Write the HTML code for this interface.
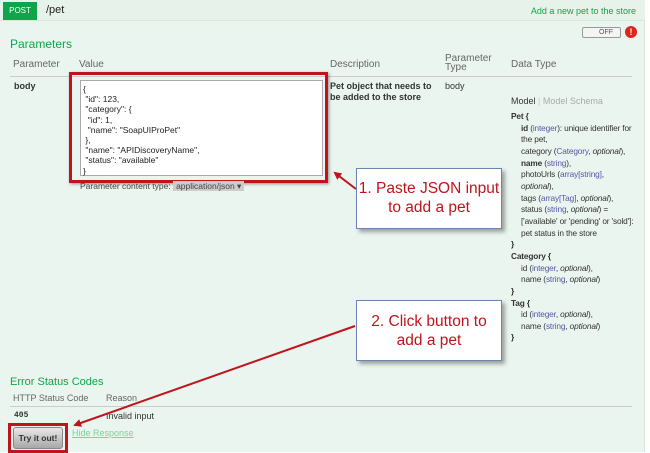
<!DOCTYPE html>
<html><head><meta charset="utf-8"><style>
*{margin:0;padding:0;box-sizing:border-box}
body{width:650px;height:452px;overflow:hidden;background:#fff;font-family:"Liberation Sans",Arial,sans-serif;position:relative}
.a{position:absolute;white-space:nowrap}
.g{color:#10a54a}
.s{font-size:9px;color:#333}
.h{font-size:10px;color:#666}
.dt{position:absolute;left:511px;top:111px;font-size:8.3px;line-height:11.65px;color:#333;letter-spacing:-0.15px}
.dt b{font-weight:bold}
.p{color:#55a;}
.dt .i{padding-left:10px}
.call{position:absolute;background:#fff;border:1px solid #6b86b0;box-shadow:3px 3px 4px rgba(0,0,0,.35);color:#c0141c;font-size:15.5px;text-align:center;line-height:19px}
</style></head><body>
<div class="a" style="left:0;top:0;width:645px;height:452px;background:#ebf5ef;border-right:1px solid #d4e6da"></div>
<div class="a" style="left:0;top:0;width:645px;height:21px;background:#e6f2ea;border-bottom:1px solid #d5e8dc"></div>
<div class="a" style="left:3px;top:2px;width:34px;height:18px;background:#10a54a;color:#fff;font-size:8px;line-height:18px;text-align:center">POST</div>
<div class="a" style="left:46px;top:4px;font-size:11px;color:#222">/pet</div>
<div class="a g" style="right:14px;top:6px;font-size:9px">Add a new pet to the store</div>
<div class="a" style="left:582px;top:27px;width:39px;height:11px;border:1px solid #999;border-radius:2px;background:#f4f4f4;font-size:7px;color:#555;line-height:9px;padding-left:16px">OFF</div>
<div class="a" style="left:625px;top:26px;width:12px;height:12px;border-radius:6px;background:#e2231a;color:#fff;font-size:9px;font-weight:bold;text-align:center;line-height:12px">!</div>
<div class="a g" style="left:10px;top:37px;font-size:12px">Parameters</div>
<div class="a h" style="left:13px;top:59px">Parameter</div>
<div class="a h" style="left:79px;top:59px">Value</div>
<div class="a h" style="left:330px;top:59px">Description</div>
<div class="a h" style="left:445px;top:54px;line-height:9px">Parameter<br>Type</div>
<div class="a h" style="left:511px;top:59px">Data Type</div>
<div class="a" style="left:10px;top:76px;width:622px;height:1px;background:#ccc"></div>
<div class="a s" style="left:14px;top:81px;font-weight:bold">body</div>
<div class="a" style="left:69px;top:72px;width:259px;height:111px;border:3px solid #c0141c;box-shadow:1px 1px 3px rgba(0,0,0,.4)"></div>
<div class="a" style="left:80px;top:80px;width:243px;height:96px;background:#fff;border:1px solid #aaa;font-size:8.5px;line-height:10.2px;color:#222;padding:3px 2px;white-space:pre">{
 "id": 123,
 "category": {
  "id": 1,
  "name": "SoapUIProPet"
 },
 "name": "APIDiscoveryName",
 "status": "available"
}</div>
<div class="a" style="left:80px;top:181px;font-size:8.5px;color:#444">Parameter content type: <span style="background:#ccc;padding:0 3px">application/json ▾</span></div>
<div class="a s" style="left:330px;top:81px;font-weight:bold;line-height:11px">Pet object that needs to<br>be added to the store</div>
<div class="a s" style="left:445px;top:81px">body</div>
<div class="a" style="left:511px;top:96px;font-size:9px;color:#333">Model <span style="color:#ccc">|</span> <span style="color:#aaa">Model Schema</span></div>
<div class="dt">
<b>Pet {</b><br>
<div class="i"><b>id</b> (<span class="p">integer</span>): unique identifier for<br>the pet,<br>category (<span class="p">Category</span>, <i>optional</i>),<br><b>name</b> (<span class="p">string</span>),<br>photoUrls (<span class="p">array[string]</span>,<br><i>optional</i>),<br>tags (<span class="p">array[Tag]</span>, <i>optional</i>),<br>status (<span class="p">string</span>, <i>optional</i>) =<br>['available' or 'pending' or 'sold']:<br>pet status in the store</div>
<b>}</b><br><b>Category {</b>
<div class="i">id (<span class="p">integer</span>, <i>optional</i>),<br>name (<span class="p">string</span>, <i>optional</i>)</div>
<b>}</b><br><b>Tag {</b>
<div class="i">id (<span class="p">integer</span>, <i>optional</i>),<br>name (<span class="p">string</span>, <i>optional</i>)</div>
<b>}</b>
</div>
<div class="a g" style="left:10px;top:376px;font-size:11px">Error Status Codes</div>
<div class="a h" style="left:13px;top:393px;font-size:9px">HTTP Status Code</div>
<div class="a h" style="left:106px;top:393px;font-size:9px">Reason</div>
<div class="a" style="left:10px;top:406px;width:622px;height:1px;background:#ccc"></div>
<div class="a s" style="left:14px;top:411px;font-family:'Liberation Mono',monospace;font-weight:bold;font-size:8px">405</div>
<div class="a s" style="left:106px;top:411px">Invalid input</div>
<div class="a" style="left:8px;top:423px;width:60px;height:30px;border:3px solid #c0141c"></div>
<div class="a" style="left:13px;top:427px;width:50px;height:22px;background:linear-gradient(#e8e8e8,#a8a8a8);border-radius:3px;border:1px solid #888;font-size:8.5px;font-weight:bold;color:#333;text-align:center;line-height:20px">Try it out!</div>
<div class="a" style="left:72px;top:428px;font-size:9px;color:#7bd29a;text-decoration:underline">Hide Response</div>
<svg class="a" style="left:0;top:0" width="650" height="452">
<defs><marker id="m" markerWidth="8" markerHeight="8" refX="6" refY="4" orient="auto" markerUnits="userSpaceOnUse"><path d="M0,0L8,4L0,8z" fill="#c0141c"/></marker></defs>
<line x1="356" y1="189" x2="335" y2="173" stroke="#c0141c" stroke-width="2" marker-end="url(#m)"/>
<line x1="355" y1="326" x2="75" y2="425" stroke="#c0141c" stroke-width="2" marker-end="url(#m)"/>
</svg>
<div class="call" style="left:356px;top:168px;width:146px;height:61px;padding-top:10px">1. Paste JSON input<br>to add a pet</div>
<div class="call" style="left:356px;top:300px;width:146px;height:61px;padding-top:11px">2. Click button to<br>add a pet</div>
</body></html>
